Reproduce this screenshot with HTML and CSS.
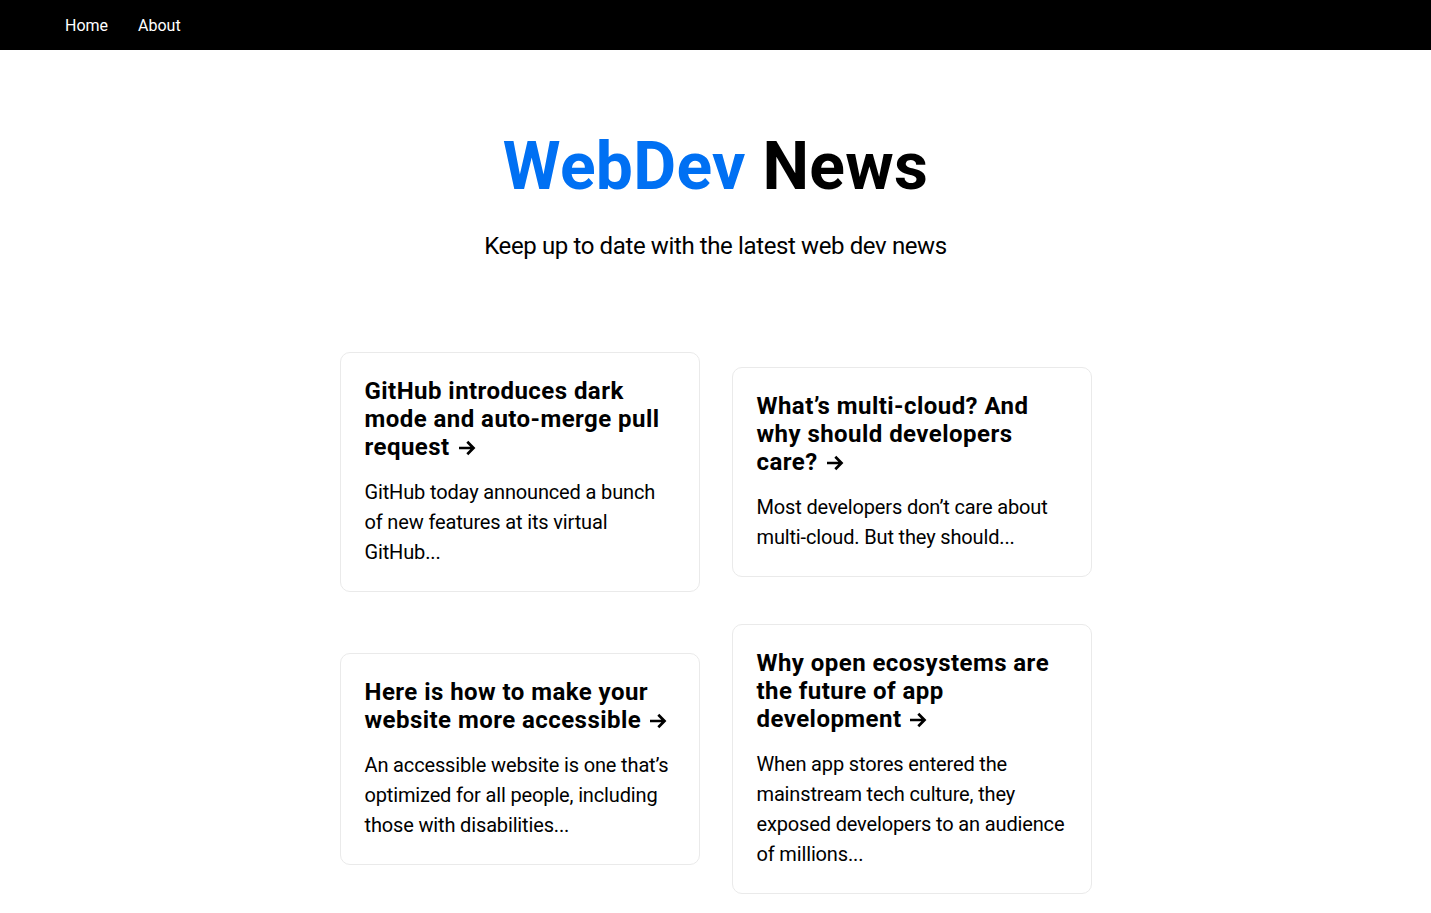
FILE: index.html
```html
<!DOCTYPE html>
<html lang="en">
<head>
<meta charset="utf-8">
<title>WebDev News</title>
<link rel="stylesheet" href="styles.css">
</head>
<body>
<nav class="nav">
  <a class="nav-link" href="#">Home</a>
  <a class="nav-link" href="#">About</a>
</nav>
<div class="container">
  <main class="main">
    <h1 class="title"><span class="brand">WebDev</span> News</h1>
    <p class="description">Keep up to date with the latest web dev news</p>
    <div class="grid">
      <a class="card" href="#">
        <h3>GitHub introduces dark mode and auto-merge pull request<svg class="arrow" viewBox="0 0 18 16" aria-hidden="true"><path d="M1 8H15.5M9.3 1.8L15.5 8L9.3 14.2"/></svg></h3>
        <p>GitHub today announced a bunch of new features at its virtual GitHub...</p>
      </a>
      <a class="card" href="#">
        <h3>What’s multi-cloud? And why should developers care?<svg class="arrow" viewBox="0 0 18 16" aria-hidden="true"><path d="M1 8H15.5M9.3 1.8L15.5 8L9.3 14.2"/></svg></h3>
        <p>Most developers don’t care about multi-cloud. But they should...</p>
      </a>
      <a class="card" href="#">
        <h3>Here is how to make your website more accessible<svg class="arrow" viewBox="0 0 18 16" aria-hidden="true"><path d="M1 8H15.5M9.3 1.8L15.5 8L9.3 14.2"/></svg></h3>
        <p>An accessible website is one that’s optimized for all people, including those with disabilities...</p>
      </a>
      <a class="card" href="#">
        <h3>Why open ecosystems are the future of app development<svg class="arrow" viewBox="0 0 18 16" aria-hidden="true"><path d="M1 8H15.5M9.3 1.8L15.5 8L9.3 14.2"/></svg></h3>
        <p>When app stores entered the mainstream tech culture, they exposed developers to an audience of millions...</p>
      </a>
    </div>
  </main>
</div>
</body>
</html>
```

FILE: styles.css
```css
* { box-sizing: border-box; }
html, body {
  margin: 0;
  padding: 0;
  font-family: Roboto, "Helvetica Neue", Arial, sans-serif;
  color: #000;
  background: #fff;
}
a { color: inherit; text-decoration: none; }

.nav {
  height: 50px;
  background: #000;
  display: flex;
  align-items: center;
  gap: 30px;
  padding-left: 65px;
}
.nav-link {
  color: #fff;
  font-size: 16px;
}

.container {
  padding: 0 0.5rem;
  display: flex;
  flex-direction: column;
  align-items: center;
}
.main {
  padding: 5rem 0;
  display: flex;
  flex-direction: column;
  align-items: center;
}
.title {
  margin: 0;
  font-size: 66px;
  line-height: 73.6px;
  font-weight: 700;
  letter-spacing: 0.3px;
  text-align: center;
}
.brand { color: #0070f3; }
.description {
  margin: 1.5rem 0;
  font-size: 1.5rem;
  line-height: 1.5;
  letter-spacing: -0.38px;
  text-align: center;
}
.grid {
  display: flex;
  align-items: center;
  justify-content: center;
  flex-wrap: wrap;
  max-width: 800px;
  margin-top: 3rem;
}
.card {
  margin: 1rem;
  flex-basis: 45%;
  padding: 1.5rem;
  text-align: left;
  border: 1px solid #eaeaea;
  border-radius: 10px;
}
.card h3 {
  margin: 0 0 1rem 0;
  font-size: 1.5rem;
  line-height: 28px;
  font-weight: 700;
  letter-spacing: 0.45px;
}
.arrow {
  width: 18px;
  height: 16px;
  margin-left: 8px;
  vertical-align: -1px;
  fill: none;
  stroke: #000;
  stroke-width: 2.7;
}
.card p {
  margin: 0;
  font-size: 1.25rem;
  line-height: 1.5;
  letter-spacing: -0.15px;
}
```
